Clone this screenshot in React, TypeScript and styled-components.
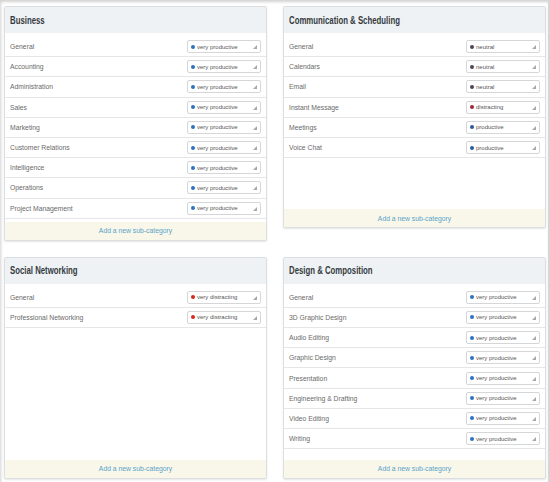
import React from "react";
import styled, { createGlobalStyle } from "styled-components";

type Level =
  | "very productive"
  | "productive"
  | "neutral"
  | "distracting"
  | "very distracting";

const levelColors: Record<Level, string> = {
  "very productive": "#2f72c0",
  productive: "#2d5a9c",
  neutral: "#4f4752",
  distracting: "#9c2a35",
  "very distracting": "#d42a22",
};

type Category = { title: string; items: [string, Level][] };

const categories: Category[] = [
  {
    title: "Business",
    items: [
      ["General", "very productive"],
      ["Accounting", "very productive"],
      ["Administration", "very productive"],
      ["Sales", "very productive"],
      ["Marketing", "very productive"],
      ["Customer Relations", "very productive"],
      ["Intelligence", "very productive"],
      ["Operations", "very productive"],
      ["Project Management", "very productive"],
    ],
  },
  {
    title: "Communication & Scheduling",
    items: [
      ["General", "neutral"],
      ["Calendars", "neutral"],
      ["Email", "neutral"],
      ["Instant Message", "distracting"],
      ["Meetings", "productive"],
      ["Voice Chat", "productive"],
    ],
  },
  {
    title: "Social Networking",
    items: [
      ["General", "very distracting"],
      ["Professional Networking", "very distracting"],
    ],
  },
  {
    title: "Design & Composition",
    items: [
      ["General", "very productive"],
      ["3D Graphic Design", "very productive"],
      ["Audio Editing", "very productive"],
      ["Graphic Design", "very productive"],
      ["Presentation", "very productive"],
      ["Engineering & Drafting", "very productive"],
      ["Video Editing", "very productive"],
      ["Writing", "very productive"],
    ],
  },
];

const GlobalStyle = createGlobalStyle`
  html, body {
    margin: 0;
    padding: 0;
    background: #fff;
  }
  body {
    font-family: "Liberation Sans", Arial, sans-serif;
  }
`;

const App: React.FC = () => {
  return (
    <>
      <GlobalStyle />
      <Frame>
        <Grid>
          {categories.map((cat) => (
            <Panel key={cat.title}>
              <Header>
                <Title>{cat.title}</Title>
              </Header>
              <List>
                {cat.items.map(([label, level]) => (
                  <Row key={label}>
                    <Label>{label}</Label>
                    <Select>
                      <Dot $color={levelColors[level]} />
                      <SelectText>{level}</SelectText>
                      <Grip />
                    </Select>
                  </Row>
                ))}
              </List>
              <Footer>Add a new sub-category</Footer>
            </Panel>
          ))}
        </Grid>
      </Frame>
    </>
  );
};

const Frame = styled.div`
  width: 550px;
  height: 482px;
  box-sizing: border-box;
  border-right: 2px solid #d6d6d6;
  box-shadow: inset 1px 2px 3px rgba(0, 0, 0, 0.18);
  overflow: hidden;
`;

const Grid = styled.div`
  display: grid;
  grid-template-columns: 263px 263px;
  column-gap: 16px;
  row-gap: 16px;
  align-items: start;
  padding: 6px 0 0 4px;
`;

const Panel = styled.div`
  display: flex;
  flex-direction: column;
  border: 1px solid #dcdfe2;
  border-radius: 2px;
  background: #fff;
  box-shadow: 0 1px 2px rgba(0, 0, 0, 0.1);
  overflow: hidden;
`;

const Header = styled.div`
  height: 26px;
  display: flex;
  align-items: center;
  padding-left: 5px;
  background: #eef2f5;
`;

const Title = styled.h2`
  margin: 0;
  font-family: "Liberation Sans", Arial, sans-serif;
  font-size: 10px;
  font-weight: 700;
  color: #353a40;
  white-space: nowrap;
  transform: scaleX(0.78);
  transform-origin: left center;
`;

const List = styled.div`
  box-sizing: border-box;
  min-height: 176px;
  padding: 4px 0 3px;
`;

const Row = styled.div`
  box-sizing: border-box;
  height: 20.2px;
  display: flex;
  align-items: center;
  justify-content: space-between;
  padding: 0 5px;
  border-bottom: 1px solid #e4e6e8;
`;

const Label = styled.span`
  font-size: 6.8px;
  color: #6a6a6a;
`;

const Select = styled.div`
  position: relative;
  box-sizing: border-box;
  width: 74px;
  height: 13px;
  display: flex;
  align-items: center;
  padding-left: 3px;
  border: 1px solid #d4d6d8;
  border-radius: 2px;
  background: #fff;
`;

const Dot = styled.span<{ $color: string }>`
  width: 4px;
  height: 4px;
  border-radius: 50%;
  background: ${(p) => p.$color};
  margin-right: 2px;
`;

const SelectText = styled.span`
  font-size: 6px;
  color: #555;
`;

const Grip = styled.span`
  position: absolute;
  right: 3px;
  bottom: 3px;
  width: 0;
  height: 0;
  border-left: 4px solid transparent;
  border-bottom: 4px solid #a8a8a8;
`;

const Footer = styled.div`
  height: 18px;
  display: flex;
  align-items: center;
  justify-content: center;
  background: #f8f7ea;
  font-size: 6.8px;
  color: #5aa3c8;
`;

export default App;
